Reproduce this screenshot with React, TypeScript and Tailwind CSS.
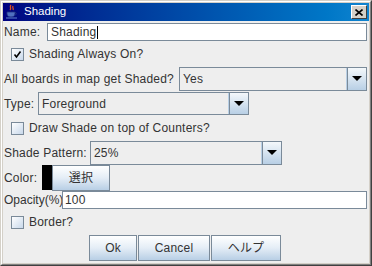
import React from "react";

const font = "font-['Liberation_Sans','Noto_Sans_CJK_JP',sans-serif]";

function JavaIcon() {
  return (
    <svg width="16" height="16" viewBox="0 0 16 16">
      <path d="M7 1c-2 2 1 3-1 5M9 2c-1 2 1 2 0 4" stroke="#e05020" strokeWidth="1.3" fill="none" />
      <path d="M3 8h8v2c0 2-2 3-4 3s-4-1-4-3z" fill="#5070c0" stroke="#203080" strokeWidth="0.8" />
      <path d="M11 8.5c2 0 2 2.5-0.5 2.5" stroke="#203080" strokeWidth="1" fill="none" />
      <path d="M2 14h11" stroke="#5070c0" strokeWidth="1.2" />
    </svg>
  );
}

function Arrow() {
  return (
    <svg width="10" height="6" viewBox="0 0 10 6">
      <polygon points="0,0 10,0 5,5" fill="#000" />
    </svg>
  );
}

function Combo({ value, className }: { value: string; className: string }) {
  return (
    <div className={`flex border border-[#7a8a99] bg-[#eeeeee] ${className}`}>
      <div className="flex-1 flex items-center pl-[3px] border-r border-[#b8cfe5]">{value}</div>
      <div className="w-[19px] flex items-center justify-center border-l border-[#7a8a99] bg-gradient-to-b from-[#f4f8fb] to-[#b8cfe5]">
        <Arrow />
      </div>
    </div>
  );
}

function Check({ checked, label, className }: { checked?: boolean; label: string; className: string }) {
  return (
    <div className={`flex items-center pl-[8px] ${className}`}>
      <div className="w-[13px] h-[13px] border border-[#7a8a99] bg-gradient-to-br from-[#ffffff] to-[#c8d8ea] flex items-center justify-center">
        {checked && (
          <svg width="9" height="9" viewBox="0 0 9 9">
            <path d="M1.5 4.5l2 2.5 4-5.5" stroke="#000" strokeWidth="1.6" fill="none" />
          </svg>
        )}
      </div>
      <span className="ml-[5px]">{label}</span>
    </div>
  );
}

function Btn({ label, className }: { label: string; className: string }) {
  return (
    <div className={`h-[26px] flex items-center justify-center border border-[#7a8a99] bg-gradient-to-b from-[#ffffff] via-[#e4edf6] to-[#b8cfe5] ${className}`}>
      {label}
    </div>
  );
}

export default function App() {
  return (
    <div className={`w-[372px] h-[266px] flex flex-col bg-[#d4d0c8] border border-t-[#d4d0c8] border-l-[#d4d0c8] border-r-[#404040] border-b-[#404040] text-[12px] text-[#333333] tracking-[0.2px] ${font}`}>
      <div className="flex-1 flex flex-col border border-t-white border-l-white border-r-[#808080] border-b-[#808080] p-px">
        {/* Title bar */}
        <div className="h-[18px] flex items-center bg-gradient-to-r from-[#000080] to-[#1084d0] pl-[1px] pr-[2px]">
          <JavaIcon />
          <span className="ml-[4px] text-white text-[11.5px] tracking-normal">Shading</span>
          <div className="ml-auto w-[16px] h-[14px] bg-[#d4d0c8] border border-t-white border-l-white border-r-[#404040] border-b-[#404040] flex items-center justify-center">
            <svg width="8" height="7" viewBox="0 0 8 7">
              <path d="M0.5 0.5l7 6M7.5 0.5l-7 6" stroke="#000" strokeWidth="1.6" />
            </svg>
          </div>
        </div>

        {/* Content */}
        <div className="flex-1 flex flex-col bg-[#eeeeee] pr-[2px]">
          <div className="h-[18px] mt-[2px] flex items-center">
            <span className="w-[44px] pl-[1px]">Name:</span>
            <div className="flex-1 h-full bg-white border border-[#7a8a99] flex items-center pl-[3px]">
              Shading<span className="inline-block w-px h-[13px] bg-black ml-px" />
            </div>
          </div>

          <Check checked label="Shading Always On?" className="h-[26px]" />

          <div className="h-[24px] flex items-center">
            <span className="w-[176px] pl-[1px]">All boards in map get Shaded?</span>
            <Combo value="Yes" className="flex-1 h-full" />
          </div>

          <div className="h-[24px] pt-px flex items-center">
            <span className="w-[35px] pl-[1px]">Type:</span>
            <Combo value="Foreground" className="w-[211px] h-full" />
          </div>

          <Check label="Draw Shade on top of Counters?" className="h-[26px]" />

          <div className="h-[24px] flex items-center">
            <span className="w-[87px] pl-[1px]">Shade Pattern:</span>
            <Combo value="25%" className="w-[192px] h-full" />
          </div>

          <div className="h-[26px] flex items-center">
            <span className="w-[39px] pl-[1px]">Color:</span>
            <div className="w-[10px] h-[25px] self-start bg-black" />
            <Btn label="選択" className="w-[58px] self-start" />
          </div>

          <div className="h-[18px] flex items-center">
            <span className="w-[59px] pl-[1px] tracking-normal">Opacity(%)</span>
            <div className="flex-1 h-full bg-white border border-[#7a8a99] flex items-center pl-[2px]">100</div>
          </div>

          <Check label="Border?" className="h-[26px]" />

          <div className="h-[26px] flex justify-center gap-px">
            <Btn label="Ok" className="w-[48px]" />
            <Btn label="Cancel" className="w-[72px]" />
            <Btn label="ヘルプ" className="w-[70px]" />
          </div>
        </div>
      </div>
    </div>
  );
}
